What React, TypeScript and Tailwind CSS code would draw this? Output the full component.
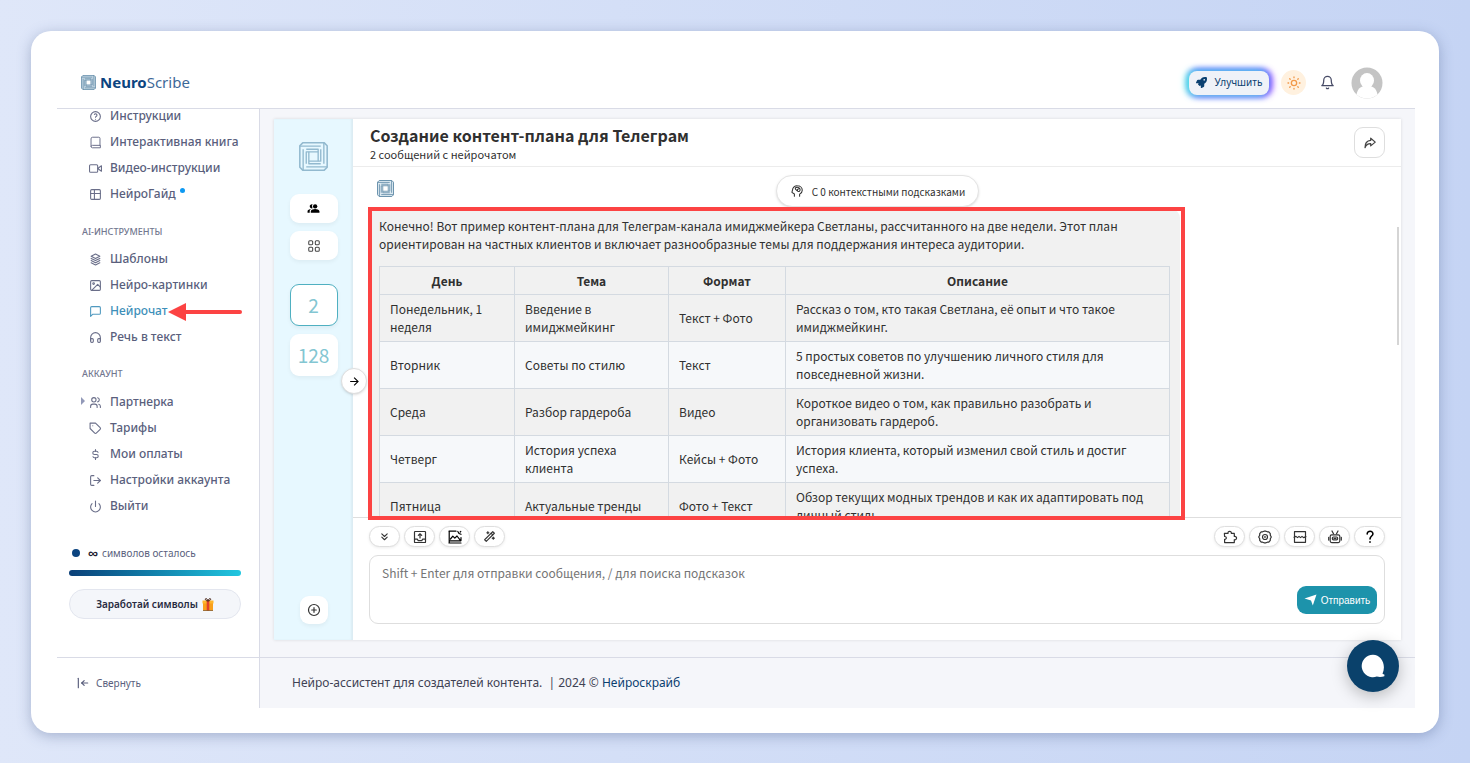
import React from "react";
import {
  TbHelp, TbTable, TbStack3, TbUsers, TbCurrencyDollar, TbArrowBarToLeft, TbSun, TbWand, TbChevronsDown,
} from "react-icons/tb";
import { FiVideo, FiImage, FiMessageSquare, FiHeadphones, FiTag, FiLogOut, FiPower, FiBell } from "react-icons/fi";
import { FaRocket } from "react-icons/fa";
import { MdPeopleAlt, MdArrowForward } from "react-icons/md";

type IconType = React.ComponentType<{ className?: string }>;

const ui = "font-['Noto_Sans',sans-serif]";
const chatFont = "font-['Noto_Sans_CJK_SC',sans-serif]";

function Logo({ className, fill = "none" }: { className?: string; fill?: string }) {
  const weave = "M.8 4H21M18.500 9.500H7V21";
  return (
    <svg viewBox="0 0 28 28" className={className} fill="none" stroke="currentColor" strokeWidth="1.3" strokeLinejoin="round" aria-hidden="true">
      <path fill={fill} strokeWidth="1.500" d="M3.600 .8H24.400L27.200 3.600V24.400L24.400 27.200H3.600L.8 24.400V3.600Z" />
      <path d="M9.500 9.500h9v9h-9z" stroke="none" fill={fill === "none" ? "none" : "#fff"} />
      <path d={weave} />
      <path d={weave} transform="rotate(90 14 14)" />
      <path d={weave} transform="rotate(180 14 14)" />
      <path d={weave} transform="rotate(270 14 14)" />
    </svg>
  );
}

function Line({ children, className = "size-4" }: { children: React.ReactNode; className?: string }) {
  return (
    <svg viewBox="0 0 16 16" className={className} fill="none" stroke="currentColor" strokeWidth="1.2" strokeLinecap="round" strokeLinejoin="round" aria-hidden="true">
      {children}
    </svg>
  );
}

const BookIcon = ({ className }: { className?: string }) => (
  <Line className={className}>
    <path d="M13.500 11.500V3A1.500 1.500 0 0 0 12 1.500H4.500A2 2 0 0 0 2.500 3.500V13M13.500 11.500H4.200a1.500 1.500 0 0 0 0 3H13.500z" />
  </Line>
);
const UploadIcon = () => (
  <Line>
    <rect x="2.500" y="2.500" width="11" height="11" rx=".6" />
    <path d="M2.500 10.200h2.900l.8 1.400h3.600l.8-1.400h2.900M8 9V5M6.300 6.400 8 4.800l1.700 1.600" />
  </Line>
);
const PictureIcon = () => (
  <Line>
    <path stroke="#000" d="M2 2.200h7M2.200 2.200v11.600M2 14h12M14 8.500v3M2.500 11.800h11.300M3.500 10l2.300-2.800 2 2L10 7l3 3.800M10.800 2.500l1.200 2 2 .8M13.800 2.400l-.6.6" />
  </Line>
);
const PuzzleIcon = () => (
  <Line>
    <path d="M2.400 4.400H6a1.700 1.700 0 1 1 3.300 0h3v3.100a1.700 1.700 0 1 1 0 3.200v2.900H2.600v-3.300c2.300.2 2.300-3 0-2.800z" />
  </Line>
);
const GearIcon = () => (
  <Line>
    <path d="M5.600 2.800 7 2.200h2l1.400.6 1.400.1 1.500 1.800v1.500l1 1.800-1 1.800v1.500l-1.500 1.800-1.400.1-1.400.6H7l-1.400-.6-1.400-.1-1.500-1.800V9.800l-1-1.800 1-1.800V4.700l1.500-1.800z" />
    <circle cx="8" cy="8" r="2.500" />
    <circle cx="8" cy="8" r=".3" />
  </Line>
);
const BreakIcon = () => (
  <Line>
    <path d="M2.500 5.800V2.700h11v3.100M2.500 10.400v2.900h11v-2.900M2 8.200l2-.8 1.500 1.200L7 7.400l1.500 1.200L10 7.400l1.500 1.200L14 7.600M2.500 5.800v4.600M13.500 5.800v4.600" />
  </Line>
);
const RobotIcon = () => (
  <Line>
    <rect x="3.200" y="5.800" width="9.600" height="7.800" rx="1.500" />
    <rect x="5.400" y="8" width="5.200" height="2.800" rx="1" />
    <path d="M5 2l1.500 2.800M11 2 9.500 4.800M1.700 8.300v2.800M14.300 8.300v2.800M7 9.400h2" />
  </Line>
);
const BrainIcon = () => (
  <Line className="size-[14px]">
    <path d="M5 14v-2.600L2.200 9.600 3.300 5A5.300 5.300 0 0 1 8.400 2C11.500 2 14 4.200 14 7s-1.500 3.500-3 4.500V14M6 4.500c2-1.400 5-.5 5.500 1.500S10 9.500 8.500 8 6 6.500 6 4.500zM8.500 8V6.300l1.700-1" />
  </Line>
);
const ShareIcon = () => (
  <Line className="size-[14px]">
    <path strokeWidth="1.400" d="M8.800 2.500 14 7l-5.200 4.300V8.800C5.500 8.700 3.500 10.200 2.300 13.400 2.200 8.500 4.800 5.300 8.800 5z" />
  </Line>
);
const GridIcon = () => (
  <Line className="size-[14px]">
    <rect x="2" y="2" width="4.500" height="4.500" rx="1.200" />
    <rect x="9.500" y="2" width="4.500" height="4.500" rx="1.200" />
    <rect x="2" y="9.500" width="4.500" height="4.500" rx="1.200" />
    <rect x="9.500" y="9.500" width="4.500" height="4.500" rx="1.200" />
  </Line>
);
const PlusIcon = () => (
  <Line>
    <circle cx="8" cy="8" r="5.500" />
    <path d="M8 5.700v4.600M5.700 8h4.600" />
  </Line>
);
const QuestionIcon = () => (
  <Line>
    <path stroke="#000" strokeWidth="1.600" d="M5.200 5c0-3.700 6-3.500 5.700 0C10.800 7 8 7.200 8 10M8 12.900v.3" />
  </Line>
);

type Item = { label: string; icon: IconType; active?: boolean; dot?: boolean; caret?: boolean };

const help: Item[] = [
  { label: "Инструкции", icon: TbHelp },
  { label: "Интерактивная книга", icon: BookIcon },
  { label: "Видео-инструкции", icon: FiVideo },
  { label: "НейроГайд", icon: TbTable, dot: true },
];
const tools: Item[] = [
  { label: "Шаблоны", icon: TbStack3 },
  { label: "Нейро-картинки", icon: FiImage },
  { label: "Нейрочат", icon: FiMessageSquare, active: true },
  { label: "Речь в текст", icon: FiHeadphones },
];
const account: Item[] = [
  { label: "Партнерка", icon: TbUsers, caret: true },
  { label: "Тарифы", icon: FiTag },
  { label: "Мои оплаты", icon: TbCurrencyDollar },
  { label: "Настройки аккаунта", icon: FiLogOut },
  { label: "Выйти", icon: FiPower },
];

function NavList({ items }: { items: Item[] }) {
  return (
    <ul>
      {items.map(({ label, icon: Icon, active, dot, caret }) => (
        <li key={label} className="relative">
          {caret && <span className="absolute top-2 left-6 border-y-4 border-l-4 border-y-transparent border-l-[#9299b8]" />}
          <a href="#" className={`flex h-[26px] items-center gap-2 pl-8 text-[12px] leading-[14px] font-medium whitespace-nowrap ${active ? "text-[#3e8fb9]" : "text-[#5a5f7d]"}`}>
            <Icon className="size-[13px] shrink-0 opacity-90" />
            {label}
            {dot && <span className="-ml-1 size-[5px] -translate-y-1 rounded-full bg-[#0d99f2]" />}
          </a>
          {active && (
            <svg className="absolute top-1 left-[111px] h-5 w-[74px]" viewBox="0 0 74 20" aria-hidden="true">
              <path d="M16 10H72" stroke="#fc4343" strokeWidth="4" strokeLinecap="round" />
              <path d="M0 10 18 1V19Z" fill="#fc4343" />
            </svg>
          )}
        </li>
      ))}
    </ul>
  );
}

function Sidebar() {
  return (
    <nav className="flex min-h-0 flex-1 flex-col border-r border-[#d9dbe6]">
      <div className="-mt-[6px]">
        <NavList items={help} />
        <h2 className="mt-[15px] mb-1 flex h-5 items-center pl-[25px] text-[9px] font-medium text-[#72778f]">AI-ИНСТРУМЕНТЫ</h2>
        <NavList items={tools} />
        <h2 className="mt-3 mb-[3px] flex h-6 items-center pl-[25px] text-[9px] font-medium text-[#72778f]">АККАУНТ</h2>
        <NavList items={account} />
      </div>
      <div className="mt-auto px-3 pb-[38px]">
        <div className="flex items-center gap-2 pl-[3px] text-[10px] leading-4 text-[#5a5f7d]">
          <span className="size-2 rounded-full bg-[#0b4480]" />
          <span className="flex items-center gap-1"><b className="text-[14px] font-bold text-[#1d2030]">∞</b>символов осталось</span>
        </div>
        <div className="mt-[9px] mr-[6px] h-[6px] rounded-full bg-gradient-to-r from-[#0b4078] to-[#22c7e0]" />
        <button className="mt-[13px] flex h-[30px] w-[172px] items-center justify-center gap-1 rounded-full border border-[#e3e6ef] bg-[#f4f6fa] text-[10px] font-semibold text-[#272b41]">
          Заработай символы
          <svg viewBox="0 0 12 13" className="h-[13px] w-3" aria-hidden="true">
            <path d="M1 5h10v7.500H1z" fill="#f9a01b" />
            <path d="M.5 2.500h11v3H.5z" fill="#ffb52b" />
            <path d="M4.700 2.500h2.600v10H4.700z" fill="#e0402a" />
            <path d="M6 3C3.500 3 2.500.6 4 .6S6 3 6 3s.5-2.400 2-2.400S8.500 3 6 3z" fill="none" stroke="#4b2a1c" />
            <path d="M1 12.500h10" stroke="#7a4a16" strokeWidth=".7" />
          </svg>
        </button>
      </div>
    </nav>
  );
}

const rows = [
  ["Понедельник, 1 неделя", "Введение в имиджмейкинг", "Текст + Фото", "Рассказ о том, кто такая Светлана, её опыт и что такое имиджмейкинг."],
  ["Вторник", "Советы по стилю", "Текст", "5 простых советов по улучшению личного стиля для повседневной жизни."],
  ["Среда", "Разбор гардероба", "Видео", "Короткое видео о том, как правильно разобрать и организовать гардероб."],
  ["Четверг", "История успеха клиента", "Кейсы + Фото", "История клиента, который изменил свой стиль и достиг успеха."],
  ["Пятница", "Актуальные тренды", "Фото + Текст", "Обзор текущих модных трендов и как их адаптировать под личный стиль."],
];

function Tool({ label, children }: { label: string; children: React.ReactNode }) {
  return (
    <button aria-label={label} className="flex h-[21px] w-[31px] items-center justify-center rounded-full border border-[#dedede] bg-white text-[#333] shadow-[0_1px_3px_rgba(0,0,0,0.08)]">
      {children}
    </button>
  );
}

function Rail() {
  const tile = "flex w-12 items-center justify-center rounded-[9px] bg-white shadow-[0_2px_4px_rgba(0,0,0,0.05)]";
  return (
    <aside className="relative flex w-[79px] shrink-0 flex-col items-center bg-[#e7f8ff] pt-[23px] pb-4 shadow-[inset_-2px_0_2px_rgba(0,0,0,0.05)]">
      <Logo className="size-[29px] text-[#92b9cf]" />
      <button aria-label="Маски" className={`${tile} mt-[23px] h-[29px] text-black`}><MdPeopleAlt className="size-[13px] -scale-x-100" /></button>
      <button aria-label="Плагины" className={`${tile} mt-2 h-[29px] text-[#444]`}><GridIcon /></button>
      <button className={`${tile} mt-6 h-[42px] border border-[#4fb0c1] text-[19px] text-[#83c6d2]`}>2</button>
      <button className={`${tile} mt-2 h-[42px] text-[19px] text-[#83c6d2]`}>128</button>
      <button aria-label="Новый чат" className="mt-auto flex size-7 items-center justify-center rounded-[9px] bg-white text-[#333] shadow-[0_2px_4px_rgba(0,0,0,0.05)]"><PlusIcon /></button>
      <button aria-label="Развернуть" className="absolute top-[249px] -right-[14px] z-20 flex size-[26px] items-center justify-center rounded-full border border-[#dedede] bg-white text-black shadow-sm"><MdArrowForward className="size-[13px]" /></button>
    </aside>
  );
}

function Chat() {
  return (
    <section className={`flex min-h-0 flex-1 bg-white shadow-[0_0_3px_rgba(0,0,0,0.12)] ${chatFont} text-[#303030]`}>
      <Rail />
      <div className="flex min-w-0 flex-1 flex-col">
        <header className="flex h-12 shrink-0 items-center justify-between border-b border-[#ececec] pr-4 pl-[17px]">
          <div>
            <h1 className="text-[16px] leading-[22px] font-bold">Создание контент-плана для Телеграм</h1>
            <p className="text-[11px] leading-4">2 сообщений с нейрочатом</p>
          </div>
          <button aria-label="Поделиться" className="flex size-[31px] items-center justify-center rounded-[9px] border border-[#dedede] text-[#444]"><ShareIcon /></button>
        </header>

        <div className="relative min-h-0 flex-1">
          <div className="h-full overflow-hidden pt-[13px] pl-4">
            <Logo className="ml-2 size-[17px] text-[#5f89a6]" fill="#dbe8f0" />
            <div className="mt-3 w-[811px] rounded-[9px] bg-[#f1f1f1] px-[10px] pt-2 text-[12px] leading-[18px]">
              <p>Конечно! Вот пример контент-плана для Телеграм-канала имиджмейкера Светланы, рассчитанного на две недели. Этот план ориентирован на частных клиентов и включает разнообразные темы для поддержания интереса аудитории.</p>
              <table className="mt-[13px] w-[791px] table-fixed border-collapse">
                <colgroup><col className="w-[135px]" /><col className="w-[154px]" /><col className="w-[117px]" /><col /></colgroup>
                <thead>
                  <tr className="h-7">
                    {["День", "Тема", "Формат", "Описание"].map((h) => <th key={h} className="border border-[#d4dae1] py-1 font-bold">{h}</th>)}
                  </tr>
                </thead>
                <tbody>
                  {rows.map((r) => (
                    <tr key={r[0]} className="h-[47px] even:bg-[#f6f8fa]">
                      {r.map((c) => <td key={c} className="border border-[#d4dae1] px-[10px] py-1">{c}</td>)}
                    </tr>
                  ))}
                </tbody>
              </table>
            </div>
          </div>
          <button className="absolute top-2 left-1/2 -ml-[101px] flex h-8 w-[203px] items-center justify-center gap-2 rounded-full border border-[#e4e4e4] bg-white text-[10px] shadow-sm"><BrainIcon />С 0 контекстными подсказками</button>
          <div className="absolute top-[60px] right-[2px] h-[118px] w-[2px] bg-[#d5d5d5]" />
          <div className="absolute top-10 -bottom-[3px] left-[15px] z-10 w-[817px] border-4 border-[#fc4343]" />
        </div>

        <div className="border-t border-[#dedede] px-4 pt-2 pb-4">
          <div className="flex justify-between">
            <div className="flex gap-1">
              <Tool label="Вниз"><TbChevronsDown className="size-[13px]" /></Tool>
              <Tool label="Загрузить"><UploadIcon /></Tool>
              <Tool label="Изображение"><PictureIcon /></Tool>
              <Tool label="Подсказки"><TbWand className="size-[13px] -scale-x-100 rotate-90" /></Tool>
            </div>
            <div className="flex gap-1">
              <Tool label="Плагины"><PuzzleIcon /></Tool>
              <Tool label="Настройки"><GearIcon /></Tool>
              <Tool label="Очистить"><BreakIcon /></Tool>
              <Tool label="Модель"><RobotIcon /></Tool>
              <Tool label="Помощь"><QuestionIcon /></Tool>
            </div>
          </div>
          <div className="relative mt-2">
            <textarea aria-label="Сообщение" placeholder="Shift + Enter для отправки сообщения, / для поиска подсказок" className="block h-[69px] w-full resize-none rounded-[9px] border border-[#dedede] bg-white px-3 py-2 text-[12px] leading-[18px] placeholder:text-[#757575]" />
            <button className="absolute right-2 bottom-[10px] flex h-7 w-20 items-center justify-center gap-1 rounded-[9px] bg-[#1d93ab] font-['Liberation_Sans',sans-serif] text-[10px] text-white">
              <svg viewBox="0 0 13 12" className="h-3 w-[13px]" fill="currentColor" aria-hidden="true"><path d="M12.500.5 8.800 11.500 7 6.500 .5 4.600z" /></svg>
              Отправить
            </button>
          </div>
        </div>
      </div>
    </section>
  );
}

export default function App() {
  return (
    <div className={`flex h-screen bg-gradient-to-r from-[#dfe7f9] to-[#c5d4f4] px-[31px] pt-[31px] pb-[30px] ${ui}`}>
      <div className="flex min-w-0 flex-1 flex-col rounded-[20px] bg-white pr-6 pb-[25px] pl-[26px] shadow-[0_3px_14px_rgba(60,80,130,0.35)]">
        <header className="flex h-[78px] shrink-0 items-center justify-between border-b border-[#d9dbe6] pt-[26px] pr-8 pl-6">
          <a href="#" className="flex items-center gap-1 text-[15px] text-[#0b4480]">
            <Logo className="size-[15px] text-[#5f89a6]" fill="#c4d6e3" />
            <span><b className="font-bold">Neuro</b><span className="opacity-80">Scribe</span></span>
          </a>
          <div className="flex items-center">
            <button className="flex h-6 w-20 items-center justify-center gap-2 rounded-lg bg-[#eff2f8] text-[10px] text-[#0b4070] shadow-[-3px_0_7px_#4cf0e4,0_-2px_6px_#4f6cff,3px_0_7px_#a84dff,0_2px_6px_#6c7dff]"><FaRocket className="size-[11px]" />Улучшить</button>
            <button aria-label="Тема" className="ml-3 flex size-[25px] items-center justify-center rounded-full bg-[#fff1df] text-[#f2994a]"><TbSun className="size-4" /></button>
            <button aria-label="Уведомления" className="ml-[14px] text-[#474b66]"><FiBell className="size-[15px]" /></button>
            <svg viewBox="0 0 32 32" className="ml-4 size-8" role="img" aria-label="Профиль">
              <circle cx="16" cy="16" r="15.500" fill="#c4c4c4" />
              <ellipse cx="16" cy="13.500" rx="7" ry="7.500" fill="#fff" />
              <path d="M5.500 27.400C7 20.500 11 18.800 16 18.800s9 1.700 10.500 8.600A15.500 15.500 0 0 1 5.500 27.400z" fill="#fff" />
            </svg>
          </div>
        </header>

        <div className="flex min-h-0 flex-1">
          <div className="flex w-[203px] shrink-0 flex-col">
            <Sidebar />
            <button className="flex h-[51px] shrink-0 items-center gap-[6px] border-t border-r border-[#d9dbe6] pl-[19px] text-[10px] text-[#5a5f7d]"><TbArrowBarToLeft className="size-[14px]" />Свернуть</button>
          </div>
          <div className="flex min-w-0 flex-1 flex-col bg-[#f5f6fa]">
            <main className="flex min-h-0 flex-1 flex-col px-[14px] pt-[10px] pb-[17px]"><Chat /></main>
            <footer className="flex h-[51px] shrink-0 items-center border-t border-[#d9dbe6] px-8 text-[12px] text-[#3f4254]">Нейро-ассистент для создателей контента.&nbsp; | 2024 ©&nbsp;<a href="#" className="text-[#0b4070]">Нейроскрайб</a></footer>
          </div>
        </div>
      </div>
      <button aria-label="Открыть чат" className="fixed right-[71px] bottom-[71px] z-30 flex size-[52px] items-center justify-center rounded-full bg-[#0a416b] shadow-[0_4px_16px_rgba(0,0,0,0.25)]">
        <svg viewBox="0 0 24 24" className="size-6" fill="#fff" aria-hidden="true"><path d="M12 .8a11.200 11.200 0 1 0 3.800 21.700c2.300.6 5.200.5 7.500-.3l.2-1.500-2-1C25.500 11 20.500.8 12 .8z" /></svg>
      </button>
    </div>
  );
}
